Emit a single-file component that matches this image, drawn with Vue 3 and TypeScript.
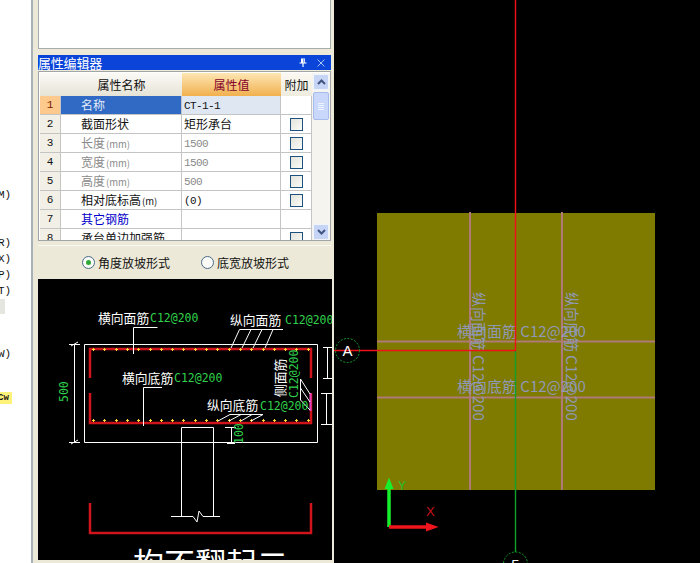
<script setup lang="ts">
interface Row {
  no: number
  name: string
  unit?: string
  value: string
  check: boolean
  kind?: 'muted' | 'link' | 'active'
  mono?: boolean
}

const rows: Row[] = [
  { no: 1, name: '名称', value: 'CT-1-1', check: false, kind: 'active', mono: true },
  { no: 2, name: '截面形状', value: '矩形承台', check: true },
  { no: 3, name: '长度', unit: '(mm)', value: '1500', check: true, kind: 'muted', mono: true },
  { no: 4, name: '宽度', unit: '(mm)', value: '1500', check: true, kind: 'muted', mono: true },
  { no: 5, name: '高度', unit: '(mm)', value: '500', check: true, kind: 'muted', mono: true },
  { no: 6, name: '相对底标高', unit: '(m)', value: '(0)', check: true, mono: true },
  { no: 7, name: '其它钢筋', value: '', check: false, kind: 'link' },
  { no: 8, name: '承台单边加强筋', value: '', check: true },
]

// the menu behind the panel, one slot per 16px line
const menuLines = ['M)', '', '', 'R)', 'X)', 'P)', 'T)', '#', '', '', 'W)', '', '', 'Cw']

const dotsX = Array.from({ length: 20 }, (_, i) => Math.round(93 + i * 11.3) + 0.5)

const whiteLines = [
  // section outline
  'M84.5 344.5H317.5V442.5H84.5Z',
  // top transverse leader
  'M157.5 327.5H133.5V354',
  // top longitudinal leader
  'M283 329.5H239.5L231 348M251 329.5L242 348M262 329.5L253 348M273 329.5L265 348',
  // bottom transverse leader
  'M162 387.5H143.5V426',
  // bottom longitudinal leader
  'M263 414.5H230L218 421M241 414.5L229 421M252 414.5L241 421M263 414.5L251 421',
  // side leader
  'M300.5 379V400M300.5 379L310 394M300.5 388L310 402M300.5 400L310 410',
  // dimensions
  'M74.5 344V442M69 344.5H80M69 442.5H80M71 346L78 342M71 444L78 440',
  'M327.5 348V379M323 347.5H332M323 378.5H332',
  'M326.5 394V424M321 393.5H332M321 424.5H332',
  'M231.5 427V443M225 427.5H236M227 443.5H235',
  // column stub and break mark
  'M181.5 516V427.5H213.5V516',
  'M171 516.5H193L197 522L199 511L203 516.5H220',
]
</script>

<template>
  <div class="screen">
    <aside class="menu">
      <div
        v-for="(line, i) in menuLines"
        :key="i"
        class="menu-line"
        :class="{ 'menu-gray': line === '#', 'menu-hot': line === 'Cw' }"
      >
        {{ line === '#' ? '' : line }}
      </div>
    </aside>

    <section class="panel">
      <div class="blank-box"></div>

      <header class="title">
        <span class="title-text">属性编辑器</span>
        <svg class="title-icon pin" width="8" height="9" viewBox="0 0 8 9">
          <path d="M2 0.5H6V4.5H7.5V5.5H4.6V9H3.4V5.5H0.5V4.5H2ZM4.5 1V4.5H5.2V1Z" fill="#fff" />
        </svg>
        <svg class="title-icon" width="8" height="8" viewBox="0 0 8 8">
          <path d="M0.5 0.5L7.5 7.5M7.5 0.5L0.5 7.5" stroke="#a8c4f0" fill="none" />
        </svg>
      </header>

      <div class="grid-frame">
        <div class="grid">
          <div class="cell head"></div>
          <div class="cell head head-name">属性名称</div>
          <div class="cell head head-value">属性值</div>
          <div class="cell head head-extra">附加</div>
          <template v-for="row in rows" :key="row.no">
            <div class="cell no" :class="{ 'no-active': row.kind === 'active' }">{{ row.no }}</div>
            <div class="cell name" :class="row.kind">{{ row.name }}<span v-if="row.unit" class="unit">{{ row.unit }}</span></div>
            <div class="cell value" :class="[row.kind, { mono: row.mono }]">{{ row.value }}</div>
            <div class="cell extra"><span v-if="row.check" class="check"></span></div>
          </template>
        </div>
        <div class="scrollbar">
          <div class="scroll-btn">
            <svg width="9" height="6" viewBox="0 0 9 6"><path d="M1 5L4.5 1.5L8 5" fill="none" stroke="#3f5580" stroke-width="2" /></svg>
          </div>
          <div class="scroll-thumb"><span></span><span></span><span></span><span></span></div>
          <div class="scroll-gap"></div>
          <div class="scroll-btn">
            <svg width="9" height="6" viewBox="0 0 9 6"><path d="M1 1L4.5 4.5L8 1" fill="none" stroke="#3f5580" stroke-width="2" /></svg>
          </div>
        </div>
      </div>

      <div class="radios">
        <label class="radio"><span class="radio-mark on"></span>角度放坡形式</label>
        <label class="radio"><span class="radio-mark"></span>底宽放坡形式</label>
      </div>

      <svg class="section" viewBox="38 279 294 281" width="294" height="281">
        <g fill="none" stroke="#d0141c" stroke-width="2.5">
          <path d="M90 378V349H311V378" />
          <path d="M90 393V423H311V393" />
          <path d="M90 503V533H311V503" />
        </g>
        <path d="M310.5 393V411" stroke="#e040c0" stroke-width="2" />
        <g stroke="#ffd83a" fill="none">
          <template v-for="x in dotsX" :key="x">
            <path :d="`M${x - 1.5} 349.5H${x + 1.5}M${x} 348V351`" />
            <path :d="`M${x - 1.5} 420.5H${x + 1.5}M${x} 419V422`" />
          </template>
        </g>
        <path v-for="d in whiteLines" :key="d" :d="d" fill="none" stroke="#fff" />

        <text class="cad-cjk" x="98" y="323">横向面筋</text>
        <text class="cad-green" x="150" y="322">C12@200</text>
        <text class="cad-cjk" x="230" y="325">纵向面筋</text>
        <text class="cad-green" x="285" y="324">C12@200</text>
        <text class="cad-cjk" x="122" y="383">横向底筋</text>
        <text class="cad-green" x="174" y="382">C12@200</text>
        <text class="cad-cjk" x="207" y="410">纵向底筋</text>
        <text class="cad-green" x="260" y="410">C12@200</text>
        <text class="cad-cjk" transform="translate(285 397) rotate(-90)">侧面筋</text>
        <text class="cad-green" transform="translate(298 398) rotate(-90)">C12@200</text>
        <text class="cad-green" transform="translate(68 402) rotate(-90)">500</text>
        <text class="cad-green" transform="translate(243 444) rotate(-90)">100</text>
        <text class="cad-big" x="133" y="575">构不翻起二</text>
      </svg>
    </section>

    <main class="canvas">
      <svg viewBox="334 0 366 563" width="366" height="563">
        <rect x="377" y="213" width="278" height="277" fill="#7f7a00" />
        <g stroke="#ae7a78" stroke-width="2" fill="none">
          <path d="M470 212V490M562 212V490" />
          <path d="M377 341.5H655M377 397.5H655" />
        </g>
        <text class="plan" x="457" y="337">横向面筋 C12@200</text>
        <text class="plan" x="457" y="392">横向底筋 C12@200</text>
        <text class="plan" transform="translate(473 292) rotate(90)">纵向面筋 C12@200</text>
        <text class="plan" transform="translate(566 292) rotate(90)">纵向底筋 C12@200</text>

        <path d="M515.5 351V563" stroke="#12a028" stroke-width="1.4" fill="none" />
        <path d="M334 350.5H515.5V0" stroke="#f01018" stroke-width="1.4" fill="none" />

        <circle cx="347.5" cy="350.5" r="12" fill="none" stroke="#12a030" stroke-dasharray="2 1.5" />
        <text class="axis-name" x="347.5" y="356" text-anchor="middle">A</text>
        <circle cx="515.5" cy="564" r="12" fill="#000" stroke="#12a030" stroke-dasharray="2 1.5" />
        <text class="axis-name" x="515.5" y="570" text-anchor="middle">5</text>

        <path d="M389 527V488" stroke="#16f02c" stroke-width="3.5" />
        <path d="M384.5 489L389 477.5L393.5 489Z" fill="#16f02c" />
        <path d="M389 527H428" stroke="#f0141c" stroke-width="3.5" />
        <path d="M426 522.5L438.5 527L426 531.5Z" fill="#f0141c" />
        <text class="axis-y" x="398" y="490">Y</text>
        <text class="axis-x" x="426" y="516">X</text>
      </svg>
    </main>
  </div>
</template>

<style scoped>
.screen {
  display: flex;
  width: 700px;
  height: 563px;
  overflow: hidden;
  background: #000;
  font-family: "Noto Sans CJK SC", "Liberation Sans", sans-serif;
  font-size: 12px;
}

.menu {
  width: 31px;
  flex: none;
  padding-top: 187px;
  box-sizing: border-box;
  background: #fff;
  overflow: hidden;
  font-family: "Liberation Mono", monospace;
  color: #111;
}
.menu-line {
  height: 16px;
  line-height: 16px;
  font-size: 11px;
  margin-left: -2px;
  padding-left: 2px;
  text-indent: -2px;
}
.menu-gray {
  width: 5px;
  height: 15px;
  background: #e6e6e0;
}
.menu-hot {
  width: 12px;
  height: 12px;
  line-height: 12px;
  margin-top: -2px;
  background: #fff27a;
  font-size: 9px;
  font-weight: bold;
}

.panel {
  width: 303px;
  flex: none;
  display: flex;
  flex-direction: column;
  box-sizing: border-box;
  padding: 0 2px 3px 5px;
  background: #ece9d8;
  border-left: 2px solid #a9b1b8;
}

.blank-box {
  height: 49px;
  margin-right: 1px;
  box-sizing: border-box;
  background: #fff;
  border: 1px solid #a7acac;
  border-top: 0;
}

.title {
  height: 15px;
  margin: 6px 1px 1px 0;
  display: flex;
  align-items: center;
  background: #0a44d8;
  color: #fff;
  font-size: 13px;
  line-height: 15px;
}
.title-text {
  flex: 1;
  letter-spacing: -0.2px;
}
.title-icon {
  margin-right: 6px;
}
.pin {
  margin-right: 10px;
}

.grid-frame {
  height: 170px;
  margin-right: 1px;
  display: flex;
  box-sizing: border-box;
  border: 1px solid #a0a6a8;
  padding: 1px 0 0 1px;
  background: #fff;
  overflow: hidden;
}

.grid {
  display: grid;
  grid-template-columns: 21px 121px 99px 31px;
  grid-template-rows: 23px repeat(8, 19px);
  height: 167px;
  overflow: hidden;
  flex: none;
}

.cell {
  box-sizing: border-box;
  height: 19px;
  line-height: 18px;
  border-right: 1px solid #c4c4c4;
  border-bottom: 1px solid #c4c4c4;
  color: #111;
  white-space: pre;
  overflow: hidden;
}

.head {
  height: 23px;
  line-height: 23px;
  text-align: center;
  border: 0;
  background: linear-gradient(#fbfaf6, #e6e3d6);
}
.head-value {
  background: linear-gradient(#fde6b4, #f1b04e);
  color: #84002c;
}
.head-extra {
  background: linear-gradient(#faf8f1, #efecdf);
}

.no {
  text-align: center;
  background: #f1efe6;
  font-family: "Liberation Mono", monospace;
  font-size: 11px;
}
.no-active {
  background: #fdc98c;
  color: #7a1c00;
}

.name {
  padding-left: 20px;
}
.unit {
  font-size: 9.5px;
  margin-left: 1px;
}
.name.active {
  background: #316ac5;
  color: #e2eaf8;
}
.value {
  padding-left: 2px;
}
.value.mono {
  font-family: "Liberation Mono", monospace;
  font-size: 11px;
  line-height: 20px;
  letter-spacing: -0.6px;
}
.value.active {
  background: #dfe7f3;
}
.cell.muted {
  color: #8a8a8a;
}
.cell.link {
  color: #0000c8;
}

.extra {
  display: flex;
  align-items: center;
  justify-content: center;
  padding-left: 1px;
}
.check {
  width: 11px;
  height: 11px;
  border: 1px solid #1c5180;
  background: linear-gradient(135deg, #e4e4dc, #fbfbf8);
}

.scrollbar {
  width: 18px;
  flex: none;
  display: flex;
  flex-direction: column;
  gap: 2px;
  padding: 1px 1px 0;
  box-sizing: border-box;
  background: #f6f4ee;
}
.scroll-btn {
  height: 14px;
  flex: none;
  display: flex;
  align-items: center;
  justify-content: center;
  border: 1px solid #f0f4fc;
  border-radius: 2px;
  background: #c6d4f6;
}
.scroll-thumb {
  height: 28px;
  flex: none;
  display: flex;
  flex-direction: column;
  align-items: center;
  justify-content: center;
  gap: 1px;
  box-sizing: border-box;
  border: 1px solid #a6bcec;
  border-radius: 2px;
  background: #c9d8fa;
}
.scroll-thumb span {
  width: 6px;
  height: 1px;
  background: #eef3fe;
}
.scroll-gap {
  flex: 1;
}

.radios {
  height: 33px;
  margin: 4px 1px 1px 0;
  display: flex;
  align-items: center;
  gap: 31px;
  padding-left: 44px;
  box-sizing: border-box;
  border-top: 1px solid #f8f7f0;
  color: #111;
}
.radio {
  display: flex;
  align-items: center;
  gap: 3px;
}
.radio-mark {
  width: 11px;
  height: 11px;
  display: flex;
  align-items: center;
  justify-content: center;
  border: 1px solid #4a6a8c;
  border-radius: 50%;
  background: #fafaf6;
}
.radio-mark.on::after {
  content: "";
  width: 5px;
  height: 5px;
  border-radius: 50%;
  background: #2ea836;
}

.section {
  display: block;
  width: 294px;
  height: 281px;
  background: #000;
  flex: none;
}
.cad-cjk {
  fill: #fff;
  font-size: 12.8px;
}
.cad-green {
  fill: #30d04c;
  font-family: "DejaVu Sans Mono", monospace;
  font-size: 11.5px;
}
.cad-big {
  fill: #fff;
  font-size: 31px;
}

.canvas {
  flex: 1;
  background: #000;
}
.canvas svg {
  display: block;
}
.plan {
  fill: #8f98b4;
  font-family: "Noto Sans CJK SC", "Liberation Sans", sans-serif;
  font-size: 15px;
}
.axis-name {
  fill: #fff;
  font-family: "Liberation Sans", sans-serif;
  font-size: 15px;
}
.axis-y {
  fill: #24c030;
  font-family: "Liberation Sans", sans-serif;
  font-size: 12px;
}
.axis-x {
  fill: #c8141c;
  font-family: "Liberation Sans", sans-serif;
  font-size: 13px;
}
</style>
